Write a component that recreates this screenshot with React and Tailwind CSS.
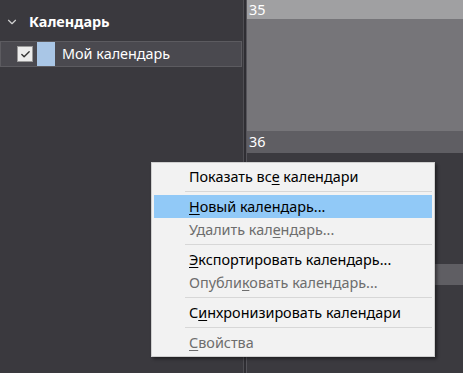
import { ChevronDown, Check } from 'lucide-react';

const menuItems = [
  { type: 'item', pre: 'Показать вс', key: 'е', post: ' календари' },
  { type: 'sep' },
  { type: 'item', pre: '', key: 'Н', post: 'овый календарь...', active: true },
  { type: 'item', pre: 'Удалить кал', key: 'е', post: 'ндарь...', disabled: true },
  { type: 'sep' },
  { type: 'item', pre: '', key: 'Э', post: 'кспортировать календарь...' },
  { type: 'item', pre: 'Опубли', key: 'к', post: 'овать календарь...', disabled: true },
  { type: 'sep' },
  { type: 'item', pre: 'С', key: 'и', post: 'нхронизировать календари' },
  { type: 'sep' },
  { type: 'item', pre: '', key: 'С', post: 'войства', disabled: true },
];

function ContextMenu() {
  return (
    <div className="absolute left-[151px] top-[162px] w-[284px] bg-[#f2f2f2] border border-[#cfcfcf] p-[2px] shadow-[2px_2px_3px_rgba(0,0,0,0.45)]">
      {menuItems.map((it, i) =>
        it.type === 'sep' ? (
          <div key={i} className="h-[7px] flex items-center pl-[31px]">
            <div className="h-px w-full bg-[#d7d7d7]" />
          </div>
        ) : (
          <div
            key={i}
            className={`h-[23px] flex items-center pl-[35px] text-[14.4px] ${
              it.active ? 'bg-[#91c9f7]' : ''
            } ${it.disabled ? 'text-[#6d6d6d]' : 'text-[#000]'}`}
          >
            <span className="whitespace-pre">
              {it.pre}
              <span className="underline underline-offset-2">{it.key}</span>
              {it.post}
            </span>
          </div>
        )
      )}
    </div>
  );
}

export default function App() {
  return (
    <div
      className="relative w-[463px] h-[373px] overflow-hidden flex bg-[#3a393e]"
      style={{ fontFamily: '"Noto Sans", "Open Sans", sans-serif' }}
    >
      {/* sidebar */}
      <div className="w-[243px] shrink-0 flex flex-col bg-[#3a393e]">
        <div className="h-[41px] flex items-center gap-[10px] pl-[5px] pt-[2px]">
          <ChevronDown size={14} strokeWidth={2} className="text-[#d0d0d0]" />
          <span className="text-white font-bold text-[14.4px]">Календарь</span>
        </div>
        <div className="h-[26px] w-[242px] flex items-center bg-[#4a494f] border border-[#5c5b60]">
          <div className="ml-[16px] w-[16px] h-[16px] bg-[#ececec] border border-[#9a9a9a] flex items-center justify-center">
            <Check size={11} strokeWidth={3} className="text-[#333]" />
          </div>
          <div className="ml-[4px] w-[18px] h-[24px] bg-[#a9c6e6]" />
          <span className="ml-[7px] text-white text-[14.4px]">Мой календарь</span>
        </div>
      </div>

      {/* divider */}
      <div className="w-px shrink-0 bg-[#4f4e53]" />
      <div className="w-[2px] shrink-0 bg-[#2f2e33]" />
      <div className="w-px shrink-0 bg-[#55545a]" />

      {/* calendar */}
      <div className="flex-1 flex flex-col">
        <div className="h-[19px] bg-[#a0a0a2] text-white text-[14.4px] pl-[2px] leading-[19px]">35</div>
        <div className="h-[112px] bg-[#767579]" />
        <div className="h-[22px] bg-[#5f5e63] text-white text-[14.4px] pl-[2px] leading-[22px]">36</div>
        <div className="h-[111px] bg-[#3b3a3f]" />
        <div className="h-[21px] bg-[#5f5e63]" />
        <div className="flex-1 bg-[#3b3a3f]" />
      </div>

      <ContextMenu />
    </div>
  );
}
